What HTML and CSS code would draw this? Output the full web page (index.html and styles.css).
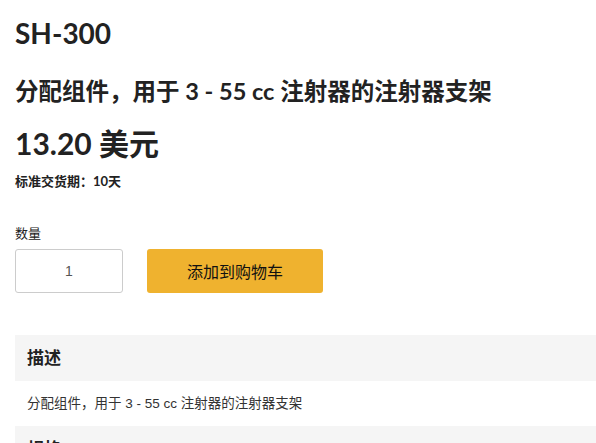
FILE: index.html
```html
<!DOCTYPE html>
<html lang="zh-CN">
<head>
    <meta charset="UTF-8">
    <meta name="viewport" content="width=device-width, initial-scale=1.0">
    <title>SH-300</title>
    <link rel="stylesheet" href="styles.css">
</head>
<body>
    <div class="product">
        <h1 class="sku">SH-300</h1>
        <h2 class="title">分配组件，用于 3 - 55 cc 注射器的注射器支架</h2>
        <div class="price">13.20 美元</div>
        <div class="lead-time">标准交货期：10天</div>

        <div class="buy">
            <label for="qty">数量</label>
            <div class="buy-row">
                <input type="text" id="qty" value="1">
                <button>添加到购物车</button>
            </div>
        </div>

        <div class="sections">
            <div class="section">
                <h3 class="section-head">描述</h3>
                <p class="section-body">分配组件，用于 3 - 55 cc 注射器的注射器支架</p>
            </div>
            <div class="section">
                <h3 class="section-head">规格</h3>
            </div>
        </div>
    </div>
</body>
</html>
```

FILE: styles.css
```css
body {
    margin: 0;
    padding: 0;
    background: #fff;
    color: #222;
    font-family: Lato, "Noto Sans CJK SC", sans-serif;
    overflow: hidden;
}
.product {
    padding: 17px 0 0 15px;
}
.sku {
    font-size: 28px;
    font-weight: 700;
    line-height: 1.2;
    margin: 0;
}
.title {
    font-size: 23.5px;
    font-weight: 700;
    line-height: 1.3;
    margin: 25px 0 0;
}
.price {
    font-size: 30px;
    font-weight: 700;
    line-height: 1.2;
    margin-top: 19px;
}
.lead-time {
    font-size: 13px;
    font-weight: 700;
    margin-top: 10px;
}
.buy {
    margin-top: 33px;
}
.buy label {
    display: block;
    font-size: 13px;
    margin-bottom: 7px;
}
.buy-row {
    display: flex;
    gap: 24px;
}
.buy-row input {
    width: 108px;
    height: 44px;
    box-sizing: border-box;
    border: 1px solid #ccc;
    border-radius: 3px;
    text-align: center;
    font-family: "Liberation Sans", Arial, sans-serif;
    font-size: 14px;
    color: #555;
    padding: 0;
}
.buy-row button {
    width: 176px;
    height: 44px;
    border: none;
    border-radius: 3px;
    background: #efb22f;
    color: #111;
    font-family: Lato, "Noto Sans CJK SC", sans-serif;
    font-size: 16px;
    cursor: pointer;
}
.sections {
    margin-top: 42px;
}
.section-head {
    background: #f5f5f5;
    margin: 0;
    padding: 0 12px;
    height: 46px;
    line-height: 46px;
    font-size: 17px;
    font-weight: 700;
}
.section-body {
    margin: 0;
    padding: 14px 12px;
    font-family: "Liberation Sans", Arial, "Noto Sans CJK SC", sans-serif;
    font-size: 13.5px;
    line-height: 17px;
    color: #333;
}
```
